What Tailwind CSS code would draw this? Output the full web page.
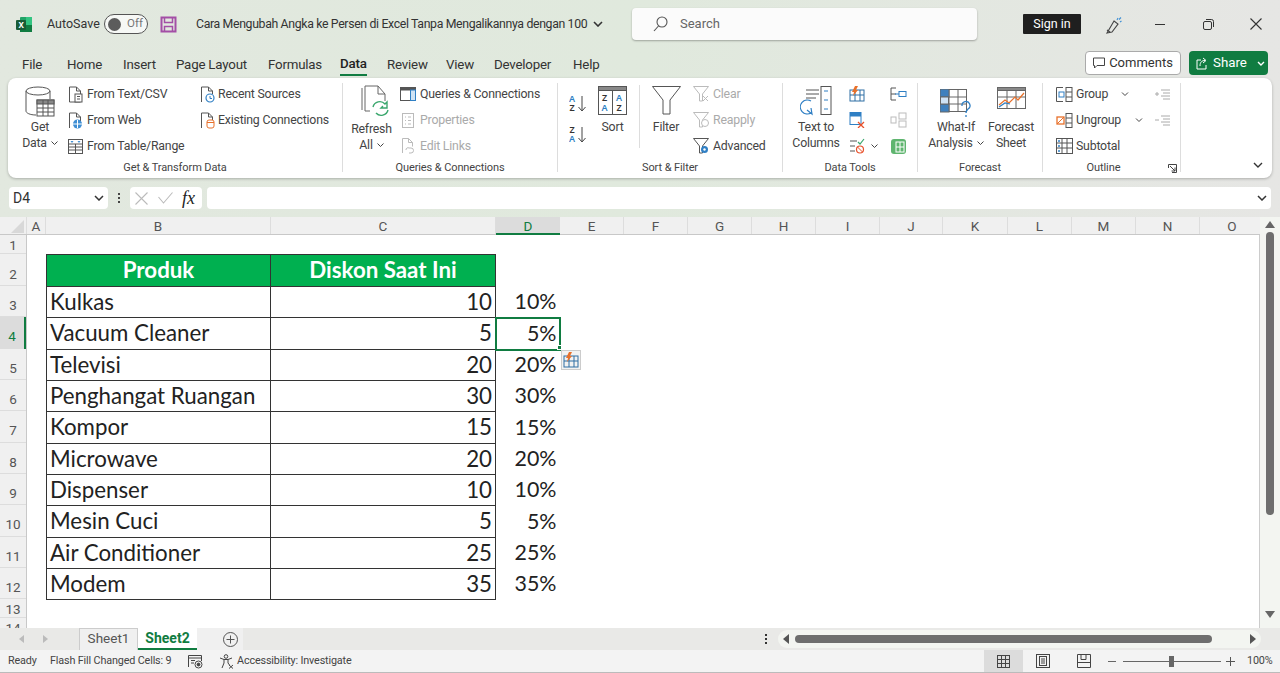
<!DOCTYPE html>
<html lang="en">
<head>
<meta charset="UTF-8">
<title>Excel - Data</title>
<script src="https://cdn.jsdelivr.net/npm/@tailwindcss/browser@4"></script>
</head>
<body class="w-[1280px] h-[673px] overflow-hidden bg-gradient-to-r from-[#e2e8df] via-[#e0e9dd] to-[#e6e6e4] text-[#444] [font-family:Roboto,sans-serif] text-[12.5px]">

<!-- title bar -->
<div class="h-[48px] flex items-center relative">
  <svg class="ml-[16px] w-[17px] h-[17px]" viewBox="0 0 17 17"><rect x="4" y="1" width="12" height="15" rx="1" fill="#21a366"/><rect x="10" y="1" width="6" height="8" fill="#33c481"/><rect x="4" y="9" width="12" height="7" fill="#107c41"/><rect x="0" y="4" width="10" height="10" rx="1" fill="#185c37"/><text x="2.4" y="12" font-size="8" font-weight="700" fill="#fff" font-family="Noto Sans">X</text></svg>
  <span class="ml-[14px] w-[57px] text-[12.5px] text-[#333]">AutoSave</span>
  <div class="w-[44px] h-[20px] rounded-full border border-[#555] bg-white/70 flex items-center pl-[3px]">
    <div class="w-[13px] h-[13px] rounded-full bg-[#5c5c5c]"></div>
    <span class="ml-[6px] text-[11.5px] text-[#777]">Off</span>
  </div>
  <svg class="ml-[12px] w-[17px] h-[17px]" viewBox="0 0 17 17" fill="none" stroke="#a34ea6" stroke-width="2"><path d="M1.5 1.5h14v14h-14z"/><path d="M4.5 1.5v5h8v-5M4.5 15.500v-5h8v5" stroke-width="1.5"/></svg>
  <span class="ml-[19px] text-[12.3px] tracking-[-0.35px] text-[#333] whitespace-nowrap">Cara Mengubah Angka ke Persen di Excel Tanpa Mengalikannya dengan 100</span>
  <svg class="ml-[6px] w-[10px] h-[6px]" viewBox="0 0 10 6" fill="none" stroke="#333" stroke-width="1.6"><path d="M1 1l4 4 4-4"/></svg>
  <div class="absolute left-[632px] top-[8px] w-[345px] h-[32px] bg-[#fbfbfb] rounded-[4px] shadow-[0_1px_2px_rgba(0,0,0,.3)] flex items-center">
    <svg class="ml-[21px] w-[15px] h-[16px]" viewBox="0 0 15 16" fill="none" stroke="#555" stroke-width="1.1"><circle cx="9" cy="6" r="5"/><path d="M5.5 10l-4.500 5"/></svg>
    <span class="ml-[12px] text-[13px] text-[#666]">Search</span>
  </div>
  <div class="absolute left-[1023px] top-[14px] w-[58px] h-[20px] bg-[#1f1f1f] rounded-[1px] text-white text-[12.5px] flex items-center justify-center">Sign in</div>
  <svg class="absolute left-[1105px] top-[16px] w-[17px] h-[18px]" viewBox="0 0 17 18" fill="none" stroke="#444" stroke-width="1.1"><path d="M9 5l4 3-6 8-5 1z"/><path d="M2 14l3 2"/><path d="M12 4l1-2M15 6l1.500-1M14 3.500l2-2" stroke="#3f8fd4"/></svg>
  <div class="absolute left-[1155px] top-[24px] w-[10px] h-px bg-[#333]"></div>
  <svg class="absolute left-[1203px] top-[19px] w-[11px] h-[11px]" viewBox="0 0 11 11" fill="none" stroke="#333"><rect x=".5" y="2.5" width="8" height="8" rx="1.500"/><path d="M3 .5h5.500a2 2 0 0 1 2 2V8"/></svg>
  <svg class="absolute left-[1250px] top-[18px] w-[12px] h-[12px]" viewBox="0 0 12 12" stroke="#333" stroke-width="1.1"><path d="M.5.5l11 11M11.500.5l-11 11"/></svg>
</div>

<!-- ribbon tabs -->
<div class="h-[30px] pt-[3px] flex items-center relative text-[13.3px] tracking-[-0.2px] text-[#333]">
  <span class="absolute left-[22px]">File</span>
  <span class="absolute left-[67px]">Home</span>
  <span class="absolute left-[123px]">Insert</span>
  <span class="absolute left-[176px]">Page Layout</span>
  <span class="absolute left-[268px]">Formulas</span>
  <span class="absolute left-[340px] font-medium text-[#222] border-b-2 border-[#107c41] leading-[20px]">Data</span>
  <span class="absolute left-[387px]">Review</span>
  <span class="absolute left-[446px]">View</span>
  <span class="absolute left-[494px]">Developer</span>
  <span class="absolute left-[573px]">Help</span>
  <div class="absolute left-[1085px] top-[3px] w-[96px] h-[24px] bg-white border border-[#aaa] rounded-[4px] flex items-center justify-center gap-[4px] text-[13px] tracking-normal">
    <svg class="w-[12px] h-[12px]" viewBox="0 0 12 12" fill="none" stroke="#444"><path d="M.5 1h11v7.500H4L1.500 11V8.500h-1z"/></svg>Comments
  </div>
  <div class="absolute left-[1189px] top-[3px] w-[79px] h-[24px] bg-[#107c41] rounded-[4px] flex items-center text-white text-[13.3px] tracking-normal">
    <svg class="ml-[7px] w-[13px] h-[13px]" viewBox="0 0 13 13" fill="none" stroke="#fff"><path d="M5 3H1v9h9V8M4 9c0-4 2-5.500 5-5.500M7 1l3 2.500L7 6"/></svg>
    <span class="ml-[4px] w-[44px]">Share</span>
    <svg class="w-[8px] h-[5px]" viewBox="0 0 8 5" fill="none" stroke="#fff" stroke-width="1.4"><path d="M1 1l3 3 3-3"/></svg>
  </div>
</div>

<!-- ribbon -->
<div class="ml-[8px] w-[1264px] h-[100px] bg-white rounded-[8px] shadow-[0_1px_3px_rgba(0,0,0,.25)] flex relative text-[12.3px] tracking-[-0.2px]">

  <!-- Get & Transform Data -->
  <div class="w-[335px] h-[89px] mt-[5px] flex flex-col border-r border-[#ddd]">
    <div class="h-[78px] shrink-0 flex -mt-[2px]">
      <div class="w-[60px] pl-[4px] flex flex-col items-center">
        <svg class="w-[30px] h-[32px] mt-[5px] shrink-0" viewBox="0 0 30 32" fill="none" stroke="#555"><ellipse cx="13" cy="5" rx="12" ry="4"/><path d="M1 5v20c0 2 4 4 10 4M25 5v8"/><rect x="12" y="14" width="17" height="16" fill="#fff"/><rect x="12" y="14" width="17" height="4" fill="#888"/><path d="M12 22h17M12 26h17M18 14v16M23 14v16"/></svg>
        <span class="mt-[1px] leading-[16px]">Get</span>
        <span class="leading-[16px] whitespace-nowrap flex items-center gap-[4px]">Data <svg class="w-[7px] h-[5px]" viewBox="0 0 7 5" fill="none" stroke="#444"><path d="M.5.5l3 3 3-3"/></svg></span>
      </div>
      <div class="w-[132px] flex flex-col">
        <div class="h-[26px] flex items-center"><svg class="w-[15px] h-[17px]" viewBox="0 0 15 17" fill="none" stroke="#555"><path d="M1.500 1h7l4 4v11h-11z"/><path d="M8.500 1v4h4"/><rect x="7" y="8" width="7" height="8" fill="#fff"/><path d="M9 10.500h3M9 13h3"/></svg><span class="ml-[4px]">From Text/CSV</span></div>
        <div class="h-[26px] flex items-center"><svg class="w-[15px] h-[17px]" viewBox="0 0 15 17" fill="none" stroke="#555"><path d="M1.500 16V1h7l4 4v4"/><path d="M8.500 1v4h4"/><circle cx="9.500" cy="12" r="4.500" fill="#3f8fd4" stroke="none"/><path d="M5 12h9M9.500 8v8" stroke="#fff"/></svg><span class="ml-[4px]">From Web</span></div>
        <div class="h-[26px] flex items-center"><svg class="w-[15px] h-[15px]" viewBox="0 0 15 15" fill="none" stroke="#555"><rect x=".5" y=".5" width="14" height="14"/><path d="M.5 5h14M.5 8h14M.5 11h14M7.500 5v10"/><path d="M2.500 2h3L4 4zM9.500 2h3L11 4z" fill="#3f8fd4" stroke="none"/></svg><span class="ml-[4px]">From Table/Range</span></div>
      </div>
      <div class="flex flex-col">
        <div class="h-[26px] flex items-center"><svg class="w-[15px] h-[17px]" viewBox="0 0 15 17" fill="none" stroke="#555"><path d="M1.500 16V1h7l4 4v3"/><path d="M8.500 1v4h4"/><circle cx="10" cy="12" r="4" fill="#fff" stroke="#2f7fc4" stroke-width="1.200"/><path d="M10 10v2.500h2" stroke="#2f7fc4"/></svg><span class="ml-[3px]">Recent Sources</span></div>
        <div class="h-[26px] flex items-center"><svg class="w-[15px] h-[17px]" viewBox="0 0 15 17" fill="none" stroke="#555"><path d="M1.500 16V1h7l4 4v3"/><path d="M8.500 1v4h4"/><rect x="7" y="8" width="7" height="8" rx="2" fill="#fff" stroke="#e8702a"/><path d="M7 10.500h7" stroke="#e8702a"/></svg><span class="ml-[3px]">Existing Connections</span></div>
      </div>
    </div>
    <div class="shrink-0 text-center text-[11px] tracking-[-0.1px] leading-[18px]">Get &amp; Transform Data</div>
  </div>

  <!-- Queries & Connections -->
  <div class="w-[215px] h-[89px] mt-[5px] flex flex-col border-r border-[#ddd]">
    <div class="h-[78px] shrink-0 flex -mt-[2px]">
      <div class="w-[57px] flex flex-col items-center">
        <svg class="w-[30px] h-[33px] mt-[4px] ml-[6px] shrink-0" viewBox="0 0 30 33" fill="none" stroke="#666"><path d="M2 3v22M5 1v25h5M5 1h13l7 8v7"/><path d="M18 1v8h7"/><path d="M13 22a7 7 0 0 1 12-3l2-2v6h-6l2-2M28 25a7 7 0 0 1-12 3" stroke="#3aa76d" stroke-width="1.4"/></svg>
        <span class="mt-[3px] leading-[16px]">Refresh</span>
        <span class="leading-[16px] whitespace-nowrap flex items-center gap-[4px]">All <svg class="w-[7px] h-[5px]" viewBox="0 0 7 5" fill="none" stroke="#444"><path d="M.5.5l3 3 3-3"/></svg></span>
      </div>
      <div class="flex flex-col">
        <div class="h-[26px] flex items-center"><svg class="w-[16px] h-[14px]" viewBox="0 0 16 14" fill="none" stroke="#555"><rect x=".5" y=".5" width="15" height="13"/><rect x=".5" y=".5" width="15" height="2.500" fill="#555"/><rect x="10.500" y="3" width="5" height="10.500" fill="#cfe3f5" stroke="#2f7fc4"/></svg><span class="ml-[4px]">Queries &amp; Connections</span></div>
        <div class="h-[26px] flex items-center text-[#aaa]"><svg class="w-[16px] h-[15px]" viewBox="0 0 16 15" fill="none" stroke="#bbb"><rect x="2.500" y=".5" width="11" height="14"/><path d="M5 4h1M8 4h3M5 7.500h1M8 7.500h3M5 11h1M8 11h3"/></svg><span class="ml-[4px]">Properties</span></div>
        <div class="h-[26px] flex items-center text-[#aaa]"><svg class="w-[16px] h-[16px]" viewBox="0 0 16 16" fill="none" stroke="#bbb"><path d="M2.500 15V.5h6l4 4v4"/><path d="M8.500.5v4h4"/><path d="M6 12a2 2 0 0 1 3-2h2a2.500 2.500 0 0 1 0 5H9"/></svg><span class="ml-[4px]">Edit Links</span></div>
      </div>
    </div>
    <div class="shrink-0 text-center text-[11px] tracking-[-0.1px] leading-[18px]">Queries &amp; Connections</div>
  </div>

  <!-- Sort & Filter -->
  <div class="w-[225px] h-[89px] mt-[5px] flex flex-col border-r border-[#ddd]">
    <div class="h-[78px] shrink-0 flex -mt-[2px]">
      <div class="w-[29px] ml-[11px] flex flex-col">
        <svg class="w-[18px] h-[22px] mt-[11px]" viewBox="0 0 18 22" fill="none"><text x="0" y="10" font-size="9" font-weight="600" fill="#2f7fc4" font-family="Noto Sans">A</text><text x=".5" y="19" font-size="9" font-weight="600" fill="#333" font-family="Noto Sans">Z</text><path d="M13 4v14M9.500 15l3.500 4 3.500-4" stroke="#444"/></svg>
        <svg class="w-[18px] h-[22px] mt-[9px]" viewBox="0 0 18 22" fill="none"><text x=".5" y="10" font-size="9" font-weight="600" fill="#333" font-family="Noto Sans">Z</text><text x="0" y="19" font-size="9" font-weight="600" fill="#2f7fc4" font-family="Noto Sans">A</text><path d="M13 4v14M9.500 15l3.500 4 3.500-4" stroke="#444"/></svg>
      </div>
      <div class="w-[29px] flex flex-col items-center">
        <svg class="w-[29px] h-[29px] mt-[5px] shrink-0" viewBox="0 0 29 29" fill="none" stroke="#555"><rect x=".5" y=".5" width="28" height="28"/><rect x=".5" y=".5" width="28" height="4" fill="#888"/><path d="M14.500 4v25"/><text x="4" y="15" font-size="9" font-weight="600" fill="#333" stroke="none" font-family="Noto Sans">Z</text><text x="3.500" y="25" font-size="9" font-weight="600" fill="#2f7fc4" stroke="none" font-family="Noto Sans">A</text><text x="18" y="15" font-size="9" font-weight="600" fill="#2f7fc4" stroke="none" font-family="Noto Sans">A</text><text x="18.500" y="25" font-size="9" font-weight="600" fill="#333" stroke="none" font-family="Noto Sans">Z</text></svg>
        <span class="mt-[4px] leading-[16px]">Sort</span>
      </div>
      <div class="w-px h-[63px] bg-[#ddd] ml-[12px] mt-[4px]"></div>
      <div class="w-[52px] flex flex-col items-center">
        <svg class="w-[29px] h-[29px] mt-[5px] shrink-0" viewBox="0 0 29 29" fill="none" stroke="#555"><path d="M.5.5h28L18 14v14h-7V14z"/></svg>
        <span class="mt-[4px] leading-[16px]">Filter</span>
      </div>
      <div class="flex flex-col ml-[1px]">
        <div class="h-[26px] flex items-center text-[#aaa]"><svg class="w-[16px] h-[16px]" viewBox="0 0 16 16" fill="none" stroke="#bbb"><path d="M.5.5h15L9.500 8v7h-3V8zM10 10l5 5M15 10l-5 5"/></svg><span class="ml-[4px]">Clear</span></div>
        <div class="h-[26px] flex items-center text-[#aaa]"><svg class="w-[16px] h-[16px]" viewBox="0 0 16 16" fill="none" stroke="#bbb"><path d="M.5.5h15L9.500 8v7h-3V8z"/><circle cx="12" cy="11" r="3.500" fill="#fff"/></svg><span class="ml-[4px]">Reapply</span></div>
        <div class="h-[26px] flex items-center"><svg class="w-[16px] h-[16px]" viewBox="0 0 16 16" fill="none" stroke="#555"><path d="M.5.5h15L9.500 8v7h-3V8z"/><circle cx="11.500" cy="11.500" r="3.500" fill="#2f7fc4" stroke="none"/><circle cx="11.500" cy="11.500" r="1.200" fill="#fff" stroke="none"/></svg><span class="ml-[4px]">Advanced</span></div>
      </div>
    </div>
    <div class="shrink-0 text-center text-[11px] tracking-[-0.1px] leading-[18px]">Sort &amp; Filter</div>
  </div>

  <!-- Data Tools -->
  <div class="w-[135px] h-[89px] mt-[5px] flex flex-col border-r border-[#ddd]">
    <div class="h-[78px] shrink-0 flex -mt-[2px]">
      <div class="w-[66px] flex flex-col items-center">
        <svg class="w-[32px] h-[31px] mt-[5px] shrink-0" viewBox="0 0 32 31" fill="none" stroke="#555"><path d="M6 4h13M6 8h13M6 12h10"/><rect x="21" y=".5" width="10" height="28"/><path d="M24 5h4M24 14h4M24 23h4" stroke="#2f7fc4"/><path d="M11 15a7 7 0 1 0 0 12M7 24l5 4-1-6" stroke="#2f7fc4" stroke-width="1.2"/></svg>
        <span class="mt-[2px] leading-[16px]">Text to</span>
        <span class="leading-[16px]">Columns</span>
      </div>
      <div class="w-[41px] flex flex-col">
        <div class="h-[26px] flex items-center"><svg class="w-[16px] h-[16px]" viewBox="0 0 16 16" fill="none" stroke="#2f6fa4"><rect x="1" y="4" width="14" height="11"/><path d="M1 9h14M6 4v11M11 4v11"/><path d="M6 0h3L7 4h2L4 10l1-4H3z" fill="#e8702a" stroke="none"/></svg></div>
        <div class="h-[26px] flex items-center"><svg class="w-[16px] h-[16px]" viewBox="0 0 16 16" fill="none"><rect x="1" y=".5" width="11" height="12" stroke="#2f7fc4"/><rect x="1" y=".5" width="11" height="4" fill="#2f7fc4"/><path d="M9 10l6 6M15 10l-6 6" stroke="#e8502a" stroke-width="1.3"/></svg></div>
        <div class="h-[26px] flex items-center"><svg class="w-[16px] h-[16px]" viewBox="0 0 16 16" fill="none" stroke="#555"><path d="M1 3h7M1 8h5M1 13h5"/><path d="M9 4l2 2 4-5" stroke="#3aa76d" stroke-width="1.2"/><circle cx="11" cy="11.500" r="3.500" stroke="#e8502a" stroke-width="1.2"/><path d="M8.500 9l5 5" stroke="#e8502a"/></svg><svg class="ml-[6px] w-[7px] h-[5px]" viewBox="0 0 7 5" fill="none" stroke="#444"><path d="M.5.5l3 3 3-3"/></svg></div>
      </div>
      <div class="flex flex-col">
        <div class="h-[26px] flex items-center"><svg class="w-[17px] h-[14px]" viewBox="0 0 17 14" fill="none" stroke="#555"><path d="M6 1H1v12h5M1 7h5"/><rect x="9" y="4.500" width="7" height="5" stroke="#2f7fc4"/><path d="M5 7h4" stroke="#2f7fc4"/></svg></div>
        <div class="h-[26px] flex items-center"><svg class="w-[17px] h-[16px]" viewBox="0 0 17 16" fill="none" stroke="#bbb"><rect x="1" y="5" width="5" height="6"/><rect x="9" y="1" width="7" height="6"/><rect x="9" y="9" width="7" height="6"/></svg></div>
        <div class="h-[26px] flex items-center"><svg class="w-[17px] h-[17px]" viewBox="0 0 17 17"><rect x="1" y="1" width="15" height="15" rx="3" fill="#5fb56f"/><rect x="6" y="4" width="8" height="10" fill="none" stroke="#fff"/><path d="M10 4v10M6 9h8" stroke="#fff"/></svg></div>
      </div>
    </div>
    <div class="shrink-0 text-center text-[11px] tracking-[-0.1px] leading-[18px]">Data Tools</div>
  </div>

  <!-- Forecast -->
  <div class="w-[125px] h-[89px] mt-[5px] flex flex-col border-r border-[#ddd]">
    <div class="h-[78px] shrink-0 flex -mt-[2px]">
      <div class="w-[72px] ml-[2px] flex flex-col items-center">
        <svg class="w-[32px] h-[28px] mt-[8px] shrink-0" viewBox="0 0 32 28" fill="none" stroke="#666"><rect x=".5" y=".5" width="26" height="22"/><path d="M.5 8h26M.5 15h26M9 .5v22M18 .5v22"/><rect x="0" y="0" width="9" height="8" fill="#3f80bd"/><rect x="0" y="15" width="9" height="8" fill="#3f80bd"/><path d="M.5 8h8v7h-8z" fill="#cfe3f5"/><path d="M22 17a4 4 0 1 1 6 3c-1 1-2 2-2 4M26 26v2" stroke="#2f7fc4" stroke-width="1.3"/></svg>
        <span class="mt-[2px] leading-[16px]">What-If</span>
        <span class="leading-[16px] whitespace-nowrap flex items-center gap-[4px]">Analysis <svg class="w-[7px] h-[5px]" viewBox="0 0 7 5" fill="none" stroke="#444"><path d="M.5.5l3 3 3-3"/></svg></span>
      </div>
      <div class="w-[50px] -ml-[6px] flex flex-col items-center">
        <svg class="w-[29px] h-[26px] mt-[6px] shrink-0" viewBox="0 0 29 26" fill="none" stroke="#666"><rect x=".5" y=".5" width="28" height="21"/><rect x=".5" y=".5" width="28" height="3" fill="#888"/><path d="M.5 10h28M10 3v18M19 3v18"/><path d="M2 18l6-5 4 3 6-6 3 3 6-7" stroke="#e8702a" stroke-width="1.2"/><path d="M2 20l6-4 5 1" stroke="#2f7fc4" stroke-width="1.2"/></svg>
        <span class="mt-[6px] leading-[16px]">Forecast</span>
        <span class="leading-[16px]">Sheet</span>
      </div>
    </div>
    <div class="shrink-0 text-center text-[11px] tracking-[-0.1px] leading-[18px]">Forecast</div>
  </div>

  <!-- Outline -->
  <div class="w-[138px] h-[89px] mt-[5px] flex flex-col border-r border-[#ddd] relative">
    <div class="h-[78px] shrink-0 flex -mt-[2px]">
      <div class="w-[98px] ml-[13px] flex flex-col">
        <div class="h-[26px] flex items-center"><svg class="w-[17px] h-[15px]" viewBox="0 0 17 15" fill="none" stroke="#555"><rect x="10" y=".5" width="6" height="14"/><path d="M10 5h6M10 10h6"/><path d="M7 .5H.5v14H7"/><rect x="3" y="5" width="5" height="5" stroke="#2f7fc4"/></svg><span class="ml-[3px] w-[45px]">Group</span><svg class="w-[8px] h-[5px]" viewBox="0 0 8 5" fill="none" stroke="#444"><path d="M1 .5l3 3 3-3"/></svg></div>
        <div class="h-[26px] flex items-center"><svg class="w-[17px] h-[15px]" viewBox="0 0 17 15" fill="none" stroke="#555"><rect x="10" y=".5" width="6" height="14"/><path d="M10 5h6M10 10h6"/><rect x="1" y="4" width="7" height="7" stroke="#e8702a" stroke-width="1.3"/><path d="M1 11l7-7" stroke="#e8702a"/></svg><span class="ml-[3px] w-[59px] whitespace-nowrap">Ungroup</span><svg class="w-[8px] h-[5px]" viewBox="0 0 8 5" fill="none" stroke="#444"><path d="M1 .5l3 3 3-3"/></svg></div>
        <div class="h-[26px] flex items-center"><svg class="w-[17px] h-[16px]" viewBox="0 0 17 16" fill="none" stroke="#555"><rect x=".5" y=".5" width="16" height="15"/><path d="M.5 5h16M.5 10h16M6 .5v15M11 .5v15"/><path d="M2 3h2M2 8h2M2 13h2M3 2v2M3 7v2M3 12v2" stroke="#2f7fc4"/></svg><span class="ml-[3px]">Subtotal</span></div>
      </div>
      <div class="flex flex-col">
        <div class="h-[26px] flex items-center"><svg class="w-[17px] h-[11px]" viewBox="0 0 17 11" fill="none" stroke="#aaa"><path d="M1 5h4M3 3v4M7 1h9M9 4h7M7 7h9M9 10h7"/></svg></div>
        <div class="h-[26px] flex items-center"><svg class="w-[17px] h-[11px]" viewBox="0 0 17 11" fill="none" stroke="#aaa"><path d="M1 5h4M7 1h9M9 4h7M7 7h9M9 10h7"/></svg></div>
      </div>
    </div>
    <div class="shrink-0 text-center text-[11px] tracking-[-0.1px] leading-[18px] pr-[16px]">Outline</div>
    <svg class="absolute right-[3px] -bottom-[1px] w-[9px] h-[9px]" viewBox="0 0 9 9" fill="none" stroke="#444"><path d="M.5 4V.5h8v8H4M2 2l5 5M7 3.500V7H3.500"/></svg>
  </div>

  <svg class="absolute right-[9px] bottom-[10px] w-[10px] h-[6px]" viewBox="0 0 10 6" fill="none" stroke="#333" stroke-width="1.4"><path d="M1 1l4 4 4-4"/></svg>
</div>

<!-- formula bar -->
<div class="mt-[9px] h-[22px] flex items-stretch text-[14px]">
  <div class="ml-[9px] w-[99px] bg-white rounded-[4px] flex items-center justify-between px-[4px] text-[#333]">D4
    <svg class="w-[10px] h-[6px]" viewBox="0 0 10 6" fill="none" stroke="#333" stroke-width="1.5"><path d="M1 1l4 4 4-4"/></svg>
  </div>
  <div class="w-[22px] flex flex-col items-center justify-center gap-[2px]"><i class="w-[2px] h-[2px] bg-[#444]"></i><i class="w-[2px] h-[2px] bg-[#444]"></i><i class="w-[2px] h-[2px] bg-[#444]"></i></div>
  <div class="w-[72px] bg-white rounded-[4px] flex items-center">
    <svg class="ml-[5px] w-[13px] h-[13px]" viewBox="0 0 13 13" stroke="#bbb" stroke-width="1.1"><path d="M.5.5l12 12M12.500.5l-12 12"/></svg>
    <svg class="ml-[10px] w-[15px] h-[12px]" viewBox="0 0 15 12" fill="none" stroke="#bbb" stroke-width="1.1"><path d="M.5 5l5 6 9-10.500"/></svg>
    <span class="ml-[9px] text-[18px] italic [font-family:'Liberation_Serif',serif] text-[#222]">fx</span>
  </div>
  <div class="ml-[5px] w-[1064px] bg-white rounded-[4px] flex items-center justify-end pr-[4px]">
    <svg class="w-[10px] h-[6px]" viewBox="0 0 10 6" fill="none" stroke="#333" stroke-width="1.5"><path d="M1 1l4 4 4-4"/></svg>
  </div>
</div>

<!-- sheet -->
<div class="mt-[8px] h-[411px] flex">
  <div class="w-[1260px] flex flex-col">
    <!-- column headers -->
    <div class="h-[18px] flex bg-[#f0f0f0] border-b border-[#c8c8c8] text-[13.5px] text-[#555] leading-[19px] text-center">
      <div class="w-[27px] border-r border-[#ddd] relative"><svg class="absolute right-[2px] bottom-[1px] w-[13px] h-[13px]" viewBox="0 0 13 13"><path d="M13 0v13H0z" fill="#d8d8d8"/></svg></div>
      <div class="w-[19px] border-r border-[#ddd]">A</div>
      <div class="w-[225px] border-r border-[#ddd]">B</div>
      <div class="w-[225px] border-r border-[#ddd]">C</div>
      <div class="w-[64px] h-[18px] bg-[#dcdcdc] border-b-2 border-[#107c41] text-[#107c41]">D</div>
      <div class="w-[64px] border-r border-[#ddd]">E</div>
      <div class="w-[64px] border-r border-[#ddd]">F</div>
      <div class="w-[64px] border-r border-[#ddd]">G</div>
      <div class="w-[64px] border-r border-[#ddd]">H</div>
      <div class="w-[64px] border-r border-[#ddd]">I</div>
      <div class="w-[63px] border-r border-[#ddd]">J</div>
      <div class="w-[65px] border-r border-[#ddd]">K</div>
      <div class="w-[64px] border-r border-[#ddd]">L</div>
      <div class="w-[64px] border-r border-[#ddd]">M</div>
      <div class="w-[64px] border-r border-[#ddd]">N</div>
      <div class="w-[60px] pl-[4px]">O</div>
    </div>
    <div class="h-[393px] flex bg-white overflow-hidden border-r border-[#ccc]">
      <!-- row headers -->
      <div class="w-[27px] shrink-0 bg-[#f0f0f0] border-r border-[#c8c8c8] text-[13.5px] text-[#555] text-center flex flex-col">
        <div class="h-[19px] shrink-0 leading-[21px] border-b border-[#ddd]">1</div>
        <div class="h-[32px] shrink-0 leading-[40px] border-b border-[#ddd]">2</div>
        <div class="h-[31px] shrink-0 leading-[38px] border-b border-[#ddd]">3</div>
        <div class="h-[32px] shrink-0 leading-[39px] bg-[#dcdcdc] border-r-2 border-[#107c41] text-[#107c41]">4</div>
        <div class="h-[31px] shrink-0 leading-[38px] border-b border-[#ddd]">5</div>
        <div class="h-[31px] shrink-0 leading-[38px] border-b border-[#ddd]">6</div>
        <div class="h-[32px] shrink-0 leading-[39px] border-b border-[#ddd]">7</div>
        <div class="h-[31px] shrink-0 leading-[38px] border-b border-[#ddd]">8</div>
        <div class="h-[31px] shrink-0 leading-[38px] border-b border-[#ddd]">9</div>
        <div class="h-[32px] shrink-0 leading-[39px] border-b border-[#ddd]">10</div>
        <div class="h-[31px] shrink-0 leading-[38px] border-b border-[#ddd]">11</div>
        <div class="h-[31px] shrink-0 leading-[38px] border-b border-[#ddd]">12</div>
        <div class="h-[19px] shrink-0 leading-[21px] border-b border-[#ddd]">13</div>
        <div class="h-[19px] shrink-0 leading-[21px]">14</div>
      </div>
      <!-- cells -->
      <div class="ml-[19px] mt-[19px] relative">
        <table class="border-collapse table-fixed w-[513px] text-[22.3px] text-[#222] [font-family:Lato,sans-serif] leading-none">
          <colgroup><col class="w-[224px]"><col class="w-[225px]"><col class="w-[64px]"></colgroup>
          <tr class="h-[32px] font-bold text-white text-center"><td class="bg-[#00b050] border border-[#333]">Produk</td><td class="bg-[#00b050] border border-[#333]">Diskon Saat Ini</td><td></td></tr>
          <tr class="h-[31px]"><td class="border border-[#333] pl-[3px]">Kulkas</td><td class="border border-[#333] text-right pr-[3px]">10</td><td class="text-right pr-[3px] text-[21.4px]">10%</td></tr>
          <tr class="h-[32px]"><td class="border border-[#333] pl-[3px]">Vacuum Cleaner</td><td class="border border-[#333] text-right pr-[3px]">5</td><td class="text-right pr-[3px] text-[21.4px] outline-2 -outline-offset-1 outline-[#107c41]">5%</td></tr>
          <tr class="h-[31px]"><td class="border border-[#333] pl-[3px]">Televisi</td><td class="border border-[#333] text-right pr-[3px]">20</td><td class="text-right pr-[3px] text-[21.4px]">20%</td></tr>
          <tr class="h-[31px]"><td class="border border-[#333] pl-[3px]">Penghangat Ruangan</td><td class="border border-[#333] text-right pr-[3px]">30</td><td class="text-right pr-[3px] text-[21.4px]">30%</td></tr>
          <tr class="h-[32px]"><td class="border border-[#333] pl-[3px]">Kompor</td><td class="border border-[#333] text-right pr-[3px]">15</td><td class="text-right pr-[3px] text-[21.4px]">15%</td></tr>
          <tr class="h-[31px]"><td class="border border-[#333] pl-[3px]">Microwave</td><td class="border border-[#333] text-right pr-[3px]">20</td><td class="text-right pr-[3px] text-[21.4px]">20%</td></tr>
          <tr class="h-[31px]"><td class="border border-[#333] pl-[3px]">Dispenser</td><td class="border border-[#333] text-right pr-[3px]">10</td><td class="text-right pr-[3px] text-[21.4px]">10%</td></tr>
          <tr class="h-[32px]"><td class="border border-[#333] pl-[3px]">Mesin Cuci</td><td class="border border-[#333] text-right pr-[3px]">5</td><td class="text-right pr-[3px] text-[21.4px]">5%</td></tr>
          <tr class="h-[31px]"><td class="border border-[#333] pl-[3px]">Air Conditioner</td><td class="border border-[#333] text-right pr-[3px]">25</td><td class="text-right pr-[3px] text-[21.4px]">25%</td></tr>
          <tr class="h-[31px]"><td class="border border-[#333] pl-[3px]">Modem</td><td class="border border-[#333] text-right pr-[3px]">35</td><td class="text-right pr-[3px] text-[21.4px]">35%</td></tr>
        </table>
        <!-- fill handle and flash fill smart tag -->
        <div class="absolute left-[511px] top-[91px] w-[5px] h-[5px] bg-[#107c41] border border-white"></div>
        <div class="absolute left-[515px] top-[96px] w-[20px] h-[20px] bg-[#f2f2f2] border border-[#ccc] flex items-center justify-center">
          <svg class="w-[16px] h-[16px]" viewBox="0 0 16 16" fill="none" stroke="#2f6fa4"><rect x="1" y="4" width="14" height="11"/><path d="M1 9h14M6 4v11M11 4v11"/><path d="M6 0h3L7 4h2L4 10l1-4H3z" fill="#e8702a" stroke="none"/></svg>
        </div>
      </div>
    </div>
  </div>
  <!-- vertical scrollbar -->
  <div class="w-[20px] flex flex-col items-center pt-[4px] bg-[#f3f5f1]">
    <svg class="w-[10px] h-[7px] shrink-0" viewBox="0 0 10 7"><path d="M5 0l5 7H0z" fill="#666"/></svg>
    <div class="w-[8px] h-[283px] mt-[4px] bg-[#6e6e6e] rounded-full"></div>
    <svg class="w-[10px] h-[7px] mt-[96px] shrink-0" viewBox="0 0 10 7"><path d="M5 7L0 0h10z" fill="#666"/></svg>
  </div>
</div>

<!-- sheet tabs -->
<div class="h-[22px] flex items-stretch bg-[#e9e9e7] relative text-[13.5px]">
  <div class="w-[79px] flex items-center pl-[19px] gap-[19px]">
    <svg class="w-[5px] h-[8px]" viewBox="0 0 5 8"><path d="M5 0v8L0 4z" fill="#bbb"/></svg>
    <svg class="w-[5px] h-[8px]" viewBox="0 0 5 8"><path d="M0 0v8l5-4z" fill="#bbb"/></svg>
  </div>
  <div class="w-[59px] bg-[#f0f0f0] border-x border-t border-[#ccc] flex items-center justify-center text-[#555] pb-[2px]">Sheet1</div>
  <div class="w-[59px] bg-white border-b-2 border-[#107c41] flex items-center justify-center text-[#107c41] font-bold text-[14px]">Sheet2</div>
  <div class="w-[46px] bg-[#f0f0f0] flex items-center pl-[26px]">
    <svg class="w-[15px] h-[15px]" viewBox="0 0 15 15" fill="none" stroke="#555"><circle cx="7.500" cy="7.500" r="7"/><path d="M7.500 3.500v8M3.500 7.500h8"/></svg>
  </div>
  <div class="absolute left-[765px] top-[6px] flex flex-col gap-[2px]"><i class="w-[2px] h-[2px] bg-[#333]"></i><i class="w-[2px] h-[2px] bg-[#333]"></i><i class="w-[2px] h-[2px] bg-[#333]"></i></div>
  <div class="absolute left-[778px] top-[2px] w-[483px] h-[18px] bg-[#f3f5f1] rounded-full flex items-center">
    <svg class="ml-[5px] w-[6px] h-[10px]" viewBox="0 0 6 10"><path d="M6 0v10L0 5z" fill="#555"/></svg>
    <div class="ml-[6px] w-[417px] h-[8px] bg-[#6e6e6e] rounded-full"></div>
    <svg class="ml-[38px] w-[6px] h-[10px]" viewBox="0 0 6 10"><path d="M0 0v10l6-5z" fill="#555"/></svg>
  </div>
</div>

<!-- status bar -->
<div class="h-[23px] flex items-center relative bg-[#f3f3f3] border-b border-[#bbb] text-[10.8px] tracking-[-0.15px] text-[#444]">
  <span class="absolute left-[8px]">Ready</span>
  <span class="absolute left-[50px]">Flash Fill Changed Cells: 9</span>
  <svg class="absolute left-[188px] top-[4px] w-[15px] h-[15px]" viewBox="0 0 15 15" fill="none" stroke="#444"><path d="M.5 13V1.500h13V7M.5 4h13M3 6.500h4M3 9h3"/><circle cx="10.500" cy="10.500" r="3.500" fill="#fff"/><circle cx="10.500" cy="10.500" r="1.500" fill="#444"/></svg>
  <svg class="absolute left-[219px] top-[4px] w-[15px] h-[15px]" viewBox="0 0 15 15" fill="none" stroke="#444"><circle cx="7" cy="2.500" r="1.800"/><path d="M1 4l4 1.500h4L13 4M5 5.500V9L3 14M9 5.500V9l1.500 2"/><path d="M10 11l4 3.500M14 11l-4 3.500"/></svg>
  <span class="absolute left-[237px]">Accessibility: Investigate</span>
  <div class="absolute left-[984px] top-0 w-[39px] h-[22px] bg-[#dcdcdc] flex items-center justify-center">
    <svg class="w-[13px] h-[13px]" viewBox="0 0 13 13" fill="none" stroke="#444"><rect x=".5" y=".5" width="12" height="12"/><path d="M.5 4.500h12M.5 8.500h12M4.500.5v12M8.500.5v12"/></svg>
  </div>
  <svg class="absolute left-[1036px] top-[4px] w-[14px] h-[14px]" viewBox="0 0 14 14" fill="none" stroke="#444"><rect x=".5" y=".5" width="13" height="13"/><rect x="3.500" y="2.500" width="7" height="9"/><path d="M5 5h4M5 7h4M5 9h4"/></svg>
  <svg class="absolute left-[1077px] top-[4px] w-[14px] h-[14px]" viewBox="0 0 14 14" fill="none" stroke="#444"><path d="M.5.5h13v13H.5zM.5 8.500h13M4 .5v5h5v-5"/></svg>
  <div class="absolute left-[1108px] top-[11px] w-[8px] h-px bg-[#666]"></div>
  <div class="absolute left-[1123px] top-[11px] w-[98px] h-px bg-[#666]"></div>
  <div class="absolute left-[1169px] top-[6px] w-[5px] h-[11px] bg-[#666]"></div>
  <svg class="absolute left-[1226px] top-[7px] w-[9px] h-[9px]" viewBox="0 0 9 9" stroke="#555"><path d="M0 4.500h9M4.500 0v9"/></svg>
  <span class="absolute left-[1247px]">100%</span>
</div>

</body>
</html>
